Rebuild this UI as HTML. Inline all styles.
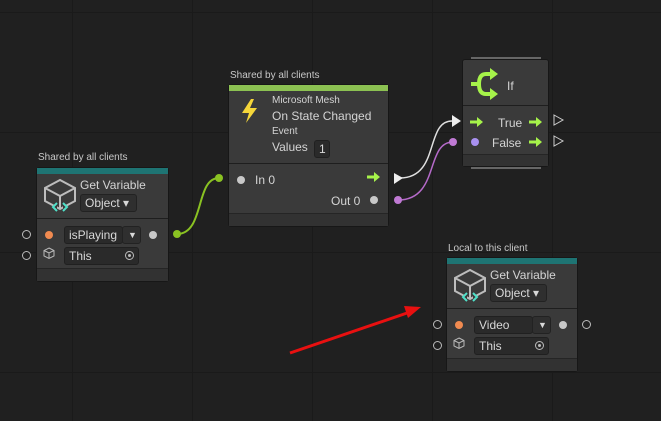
<!DOCTYPE html>
<html><head><style>
body{margin:0;width:661px;height:421px;overflow:hidden;background:#202020;font-family:"Liberation Sans",sans-serif;position:relative;color:#d2d2d2}
.a{position:absolute}
.node{position:absolute;background:#3a3a3a;border:1px solid #171717;border-radius:3px;box-sizing:border-box}
.lbl{position:absolute;font-size:10px;color:#c8c8c8}
.sep{position:absolute;left:0;right:0;height:1px;background:#1e1e1e}
.ft{position:absolute;left:0;right:0;bottom:0;height:11px;background:#323232;border-top:1px solid #252525}
.fld{position:absolute;background:#2a2a2a;border:1px solid #202020;border-radius:3px;box-sizing:border-box;font-size:12px;color:#d8d8d8;padding-left:4px;line-height:16px}
.dd{position:absolute;background:#2f2f2f;border:1px solid #222;border-radius:3px;box-sizing:border-box;font-size:12px;color:#d8d8d8;line-height:16px;padding-left:4px}
.dot{position:absolute;width:8px;height:8px;border-radius:50%}
.ring{position:absolute;width:7px;height:7px;border-radius:50%;border:1px solid #bbb}
.t{position:absolute;font-size:12px;color:#d4d4d4;white-space:nowrap}
</style></head><body>
<svg class="a" style="left:0;top:0" width="661" height="421">
<g stroke="#1a1a1a" stroke-width="1">
<line x1="72.5" y1="0" x2="72.5" y2="421"/><line x1="192.5" y1="0" x2="192.5" y2="421"/><line x1="312.5" y1="0" x2="312.5" y2="421"/><line x1="432.5" y1="0" x2="432.5" y2="421"/><line x1="552.5" y1="0" x2="552.5" y2="421"/>
<line x1="0" y1="12.5" x2="661" y2="12.5"/><line x1="0" y1="132.5" x2="661" y2="132.5"/><line x1="0" y1="252.5" x2="661" y2="252.5"/><line x1="0" y1="372.5" x2="661" y2="372.5"/>
</g>
<path d="M177 234 C205 234,195 178,219 178" stroke="#8ac222" stroke-width="2" fill="none"/>
<circle cx="177" cy="234" r="4" fill="#8ac222"/><circle cx="219" cy="178" r="4" fill="#8ac222"/>
<path d="M400 178 C440 178,425 121,452 121" stroke="#e0e0e0" stroke-width="1.5" fill="none"/>
<path d="M394 173 L403 178 L394 184Z" fill="#eee"/><path d="M452 115 L461 121 L452 127Z" fill="#eee"/>
<path d="M398 200 C440 200,425 142,453 142" stroke="#b56ac9" stroke-width="1.5" fill="none"/>
<circle cx="398" cy="200" r="4" fill="#c07ad4"/><circle cx="453" cy="142" r="4" fill="#c07ad4"/>
<line x1="290" y1="353" x2="410" y2="312" stroke="#e81010" stroke-width="3"/>
<path d="M421 307 L404 306 L408 318Z" fill="#e81010"/>
</svg>

<div class="lbl" style="left:38px;top:152px">Shared by all clients</div>
<div class="node" style="left:36px;top:167px;width:133px;height:115px">
<div class="a" style="left:0;top:0;right:0;height:6px;background:#1e7473"></div>
<svg class="a" style="left:5px;top:10px" width="36" height="38"><path d="M18 2 L33 10 L33 23 L18 31 L3 23 L3 10Z M3 10 L18 18 L33 10 M18 18 L18 31" stroke="#bdbdbd" stroke-width="2" fill="none"/><path d="M15 25 L11 29 L15 33 M21 25 L25 29 L21 33" stroke="#4fe0c9" stroke-width="2" fill="#3a3a3a"/></svg>
<div class="t" style="left:43px;top:10px">Get Variable</div>
<div class="dd" style="left:43px;top:26px;width:57px;height:18px">Object ▾</div>
<div class="sep" style="top:50px"></div>
<div class="dot" style="left:8px;top:63px;background:#f08a50"></div>
<div class="fld" style="left:27px;top:58px;width:59px;height:18px">isPlaying</div>
<div class="dd" style="left:85px;top:58px;width:19px;height:18px;font-size:9px;padding-left:5px">▼</div>
<div class="dot" style="left:112px;top:63px;background:#c8c8c8"></div>
<svg class="a" style="left:6px;top:79px" width="12" height="13"><path d="M6 1 L11 3.5 L11 9 L6 11.5 L1 9 L1 3.5Z M1 3.5 L6 6 L11 3.5 M6 6 L6 11.5" stroke="#bbb" fill="none"/></svg>
<div class="fld" style="left:27px;top:79px;width:75px;height:18px">This<span style="position:absolute;right:4px;top:3px;width:7px;height:7px;border:1px solid #bbb;border-radius:50%;font-size:0"><span style="position:absolute;left:2px;top:2px;width:3px;height:3px;background:#bbb;border-radius:50%"></span></span></div>
<div class="ft" style="height:12px"></div>
</div>
<div class="ring" style="left:22px;top:230px"></div>
<div class="ring" style="left:22px;top:251px"></div>

<div class="lbl" style="left:230px;top:70px">Shared by all clients</div>
<div class="node" style="left:228px;top:84px;width:161px;height:143px">
<div class="a" style="left:0;top:0;right:0;height:6px;background:#8cc152"></div>
<svg class="a" style="left:10px;top:12px" width="22" height="28"><path d="M12 2 L3 16 L10 16 L7 26 L18 11 L11 11 L15 2Z" fill="#f5d63a"/></svg>
<div class="t" style="left:43px;top:10px;font-size:10px">Microsoft Mesh</div>
<div class="t" style="left:43px;top:24px">On State Changed</div>
<div class="t" style="left:43px;top:41px;font-size:10px">Event</div>
<div class="t" style="left:43px;top:55px">Values</div>
<div class="fld" style="left:85px;top:55px;width:16px;height:18px;padding-left:4px">1</div>
<div class="sep" style="top:78px"></div>
<div class="dot" style="left:8px;top:91px;background:#c8c8c8"></div>
<div class="t" style="left:26px;top:88px">In 0</div>
<svg class="a" style="left:138px;top:87px" width="14" height="10"><path d="M0 5 H8" stroke="#a6f34a" stroke-width="3"/><path d="M7 0 L13 5 L7 10Z" fill="#a6f34a"/></svg>
<div class="t" style="left:102px;top:109px">Out 0</div>
<div class="dot" style="left:141px;top:111px;background:#c8c8c8"></div>
<div class="ft" style="height:12px"></div>
</div>

<div class="a" style="left:471px;top:57px;width:70px;height:2px;background:#666"></div>
<div class="node" style="left:462px;top:59px;width:87px;height:108px">
<svg class="a" style="left:6px;top:7px" width="30" height="34"><path d="M24 7 H17 Q10 7 10 17 Q10 27 17 27 H24 M2 17 H10" stroke="#a6f34a" stroke-width="4" fill="none"/><path d="M21 1 L29 7 L21 13Z M21 21 L29 27 L21 33Z" fill="#a6f34a"/></svg>
<div class="t" style="left:44px;top:19px">If</div>
<div class="sep" style="top:45px"></div>
<svg class="a" style="left:7px;top:57px" width="14" height="10"><path d="M0 5 H8" stroke="#a6f34a" stroke-width="3"/><path d="M7 0 L13 5 L7 10Z" fill="#a6f34a"/></svg>
<div class="t" style="left:35px;top:56px">True</div>
<svg class="a" style="left:66px;top:57px" width="14" height="10"><path d="M0 5 H8" stroke="#a6f34a" stroke-width="3"/><path d="M7 0 L13 5 L7 10Z" fill="#a6f34a"/></svg>
<div class="dot" style="left:8px;top:78px;background:#a991f0"></div>
<div class="t" style="left:29px;top:76px">False</div>
<svg class="a" style="left:66px;top:77px" width="14" height="10"><path d="M0 5 H8" stroke="#a6f34a" stroke-width="3"/><path d="M7 0 L13 5 L7 10Z" fill="#a6f34a"/></svg>
<div class="ft" style="height:11px"></div>
</div>
<div class="a" style="left:471px;top:167px;width:70px;height:2px;background:#666"></div>
<svg class="a" style="left:553px;top:114px" width="12" height="34"><path d="M1 1 L10 6 L1 11Z M1 22 L10 27 L1 32Z" stroke="#ccc" fill="none"/></svg>

<div class="lbl" style="left:448px;top:243px">Local to this client</div>
<div class="node" style="left:446px;top:257px;width:132px;height:115px">
<div class="a" style="left:0;top:0;right:0;height:6px;background:#1e7473"></div>
<svg class="a" style="left:5px;top:10px" width="36" height="38"><path d="M18 2 L33 10 L33 23 L18 31 L3 23 L3 10Z M3 10 L18 18 L33 10 M18 18 L18 31" stroke="#bdbdbd" stroke-width="2" fill="none"/><path d="M15 25 L11 29 L15 33 M21 25 L25 29 L21 33" stroke="#4fe0c9" stroke-width="2" fill="#3a3a3a"/></svg>
<div class="t" style="left:43px;top:10px">Get Variable</div>
<div class="dd" style="left:43px;top:26px;width:57px;height:18px">Object ▾</div>
<div class="sep" style="top:50px"></div>
<div class="dot" style="left:8px;top:63px;background:#f08a50"></div>
<div class="fld" style="left:27px;top:58px;width:59px;height:18px">Video</div>
<div class="dd" style="left:85px;top:58px;width:19px;height:18px;font-size:9px;padding-left:5px">▼</div>
<div class="dot" style="left:112px;top:63px;background:#c8c8c8"></div>
<svg class="a" style="left:6px;top:79px" width="12" height="13"><path d="M6 1 L11 3.5 L11 9 L6 11.5 L1 9 L1 3.5Z M1 3.5 L6 6 L11 3.5 M6 6 L6 11.5" stroke="#bbb" fill="none"/></svg>
<div class="fld" style="left:27px;top:79px;width:75px;height:18px">This<span style="position:absolute;right:4px;top:3px;width:7px;height:7px;border:1px solid #bbb;border-radius:50%;font-size:0"><span style="position:absolute;left:2px;top:2px;width:3px;height:3px;background:#bbb;border-radius:50%"></span></span></div>
<div class="ft" style="height:12px"></div>
</div>
<div class="ring" style="left:433px;top:320px"></div>
<div class="ring" style="left:433px;top:341px"></div>
<div class="ring" style="left:582px;top:320px"></div>
</body></html>
